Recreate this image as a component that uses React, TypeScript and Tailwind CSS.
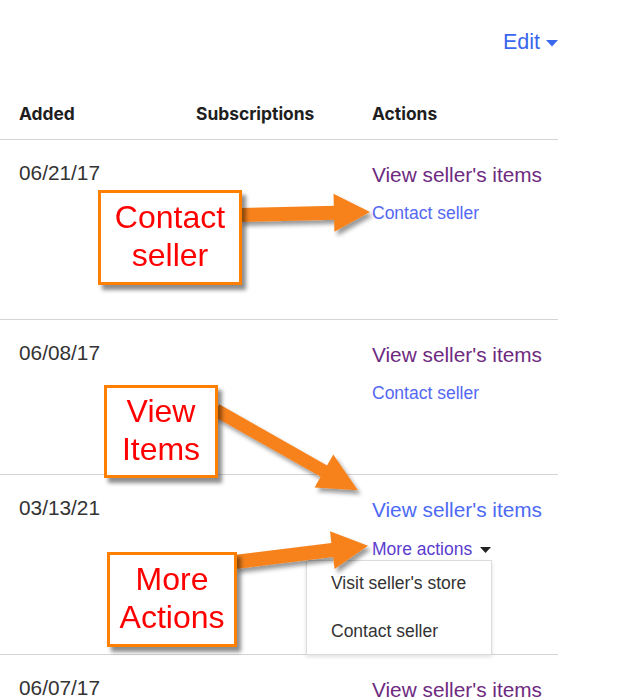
import React from "react";

const body = { fontFamily: '"Liberation Sans", Arial, sans-serif' };

function Callout({ left, top, w, h, lines }: { left: number; top: number; w: number; h: number; lines: string[] }) {
  return (
    <div
      className="absolute bg-white border-[3px] border-[#ff8000] shadow-[4px_5px_4px_rgba(0,0,0,0.45)] flex flex-col items-center justify-center pb-[3px] text-[32px] leading-[38px] text-[#ff0000]"
      style={{ left, top, width: w, height: h }}
    >
      {lines.map((l) => (
        <div key={l}>{l}</div>
      ))}
    </div>
  );
}

function Row({
  date,
  h,
  children,
  border = true,
}: {
  date: string;
  h: string;
  children: React.ReactNode;
  border?: boolean;
}) {
  return (
    <div className={`flex pl-[19px] pt-[21px] ${h} ${border ? "border-b border-[#d4d4d4]" : ""}`}>
      <div className="w-[177px] text-[20.8px] leading-[24px] text-[#333]">{date}</div>
      <div className="w-[176px]" />
      <div className="flex flex-col mt-[2px]">{children}</div>
    </div>
  );
}

export default function App() {
  return (
    <div className="relative w-[630px] h-[700px] bg-white overflow-hidden" style={body}>
      <div className="w-[558px]">
        <div className="h-[90px] flex justify-end items-start pt-[29px]">
          <span className="text-[21.5px] leading-[26px] text-[#3b67ee]">Edit</span>
          <svg width="12" height="7" viewBox="0 0 12 7" className="ml-[6px] mt-[11px]">
            <polygon points="0,0 12,0 6,6.5" fill="#3b67ee" />
          </svg>
        </div>
        <div
          className="h-[50px] flex items-center pl-[19px] border-b border-[#d4d4d4] text-[17.4px] font-bold text-[#1e1e1e]"
          style={{ fontFamily: 'Inter, "Liberation Sans", sans-serif' }}
        >
          <div className="w-[177px]">Added</div>
          <div className="w-[176px]">Subscriptions</div>
          <div>Actions</div>
        </div>
        <Row date="06/21/17" h="h-[180px]">
          <span className="text-[20.8px] leading-[24px] text-[#6e2a80]">View seller's items</span>
          <span className="mt-[16px] text-[17.5px] leading-[20px] text-[#5468f2]">Contact seller</span>
        </Row>
        <Row date="06/08/17" h="h-[155px]">
          <span className="text-[20.8px] leading-[24px] text-[#6e2a80]">View seller's items</span>
          <span className="mt-[16px] text-[17.5px] leading-[20px] text-[#5468f2]">Contact seller</span>
        </Row>
        <Row date="03/13/21" h="h-[180px]">
          <span className="text-[20.8px] leading-[24px] text-[#4d6af4]">View seller's items</span>
          <span className="mt-[17px] flex items-center text-[17.5px] leading-[20px] text-[#5b3ccf]">
            More actions
            <svg width="11" height="6" viewBox="0 0 11 6" className="ml-[8px] mt-[2px]">
              <polygon points="0,0 11,0 5.5,6" fill="#222" />
            </svg>
          </span>
        </Row>
        <Row date="06/07/17" h="h-[60px]" border={false}>
          <span className="text-[20.8px] leading-[24px] text-[#6e2a80]">View seller's items</span>
        </Row>
      </div>

      <div className="absolute left-[306px] top-[560px] w-[186px] h-[95px] bg-white border border-[#dcdcdc] shadow-[0_2px_4px_rgba(0,0,0,0.12)] pl-[24px] pt-[11px] text-[17.5px] leading-[22px] text-[#333]">
        <div>Visit seller's store</div>
        <div className="mt-[26px]">Contact seller</div>
      </div>

      <svg className="absolute left-0 top-0 pointer-events-none" width="630" height="700" viewBox="0 0 630 700">
        <defs>
          <filter id="sh" x="-20%" y="-40%" width="140%" height="180%">
            <feDropShadow dx="3" dy="4" stdDeviation="2.2" floodColor="#000" floodOpacity="0.4" />
          </filter>
        </defs>
        <g filter="url(#sh)" fill="#f7821c">
          <g transform="translate(240 215) rotate(-1.3)">
            <rect x="0" y="-7" width="96" height="14" />
            <polygon points="94,-19 130,0 94,19" />
          </g>
          <g transform="translate(216 410) rotate(29.5)">
            <rect x="0" y="-6.5" width="126" height="13" />
            <polygon points="124,-19 163,0 124,19" />
          </g>
          <g transform="translate(235 562) rotate(-7)">
            <rect x="0" y="-7" width="100" height="14" />
            <polygon points="98,-19 134,0 98,19" />
          </g>
        </g>
      </svg>

      <Callout left={98} top={190} w={144} h={95} lines={["Contact", "seller"]} />
      <Callout left={104} top={385} w={114} h={93} lines={["View", "Items"]} />
      <Callout left={107} top={552} w={130} h={95} lines={["More", "Actions"]} />
    </div>
  );
}
